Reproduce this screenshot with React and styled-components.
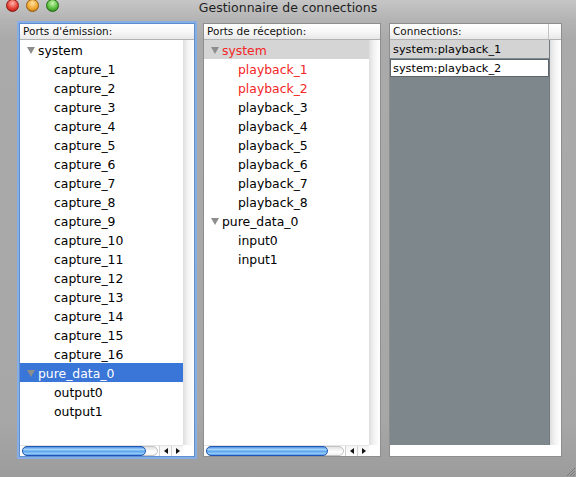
import React from "react";
import styled, { createGlobalStyle } from "styled-components";

const GlobalStyle = createGlobalStyle`
  html, body {
    margin: 0;
    padding: 0;
  }
  body {
    font-family: "DejaVu Sans", "Liberation Sans", sans-serif;
    background: #a5a5a5;
  }
`;

const captures = Array.from({ length: 16 }, (_, i) => `capture_${i + 1}`);
const playbacks = Array.from({ length: 8 }, (_, i) => `playback_${i + 1}`);

const sources = [
  { name: "system", children: captures.map((c) => ({ name: c })) },
  {
    name: "pure_data_0",
    selected: true,
    children: [{ name: "output0" }, { name: "output1" }],
  },
];

const targets = [
  {
    name: "system",
    active: true,
    red: true,
    children: playbacks.map((p, i) => ({ name: p, red: i < 2 })),
  },
  { name: "pure_data_0", children: [{ name: "input0" }, { name: "input1" }] },
];

const lightColors = {
  red: ["#ffb3ab", "#e2392f", "#8e1610"],
  orange: ["#ffe0a0", "#eea52c", "#9a5a08"],
  green: ["#c8f5b0", "#52b936", "#1f6b12"],
};

//tree triangle
const Disclosure = () => (
  <TriangleIcon width="8" height="7" viewBox="0 0 8 7">
    <polygon points="0,0 8,0 4,7" fill="#8d8d8d" />
  </TriangleIcon>
);

const Arrow = ({ dir }) => (
  <svg width="4" height="6" viewBox="0 0 4 6">
    {dir === "left" ? (
      <polygon points="4,0 4,6 0,3" fill="#111" />
    ) : (
      <polygon points="0,0 0,6 4,3" fill="#111" />
    )}
  </svg>
);

const HScroll = ({ thumb }) => (
  <ScrollRow>
    <ScrollBar>
      <Track>
        <Thumb style={{ width: thumb }} />
      </Track>
      <Arrows>
        <ArrowButton>
          <Arrow dir="left" />
        </ArrowButton>
        <ArrowButton>
          <Arrow dir="right" />
        </ArrowButton>
      </Arrows>
    </ScrollBar>
    <Corner />
  </ScrollRow>
);

const Tree = ({ nodes }) => (
  <List>
    {nodes.map((node) => (
      <React.Fragment key={node.name}>
        <Row $selected={node.selected} $active={node.active} $red={node.red}>
          <Disclosure />
          {node.name}
        </Row>
        {node.children.map((child) => (
          <Row key={child.name} $child $red={child.red}>
            {child.name}
          </Row>
        ))}
      </React.Fragment>
    ))}
  </List>
);

const App = () => {
  return (
    <>
      <GlobalStyle />
      <Window>
        <TitleBar>
          <Lights>
            <Light $c="red" />
            <Light $c="orange" />
            <Light $c="green" />
          </Lights>
          <Title>Gestionnaire de connections</Title>
          <span />
        </TitleBar>
        <Panes>
          <Panel $width={176} $focused>
            <Header>Ports d'émission:</Header>
            <Body>
              <Tree nodes={sources} />
              <Strip />
            </Body>
            <HScroll thumb={124} />
          </Panel>
          <Panel $width={178}>
            <Header>Ports de réception:</Header>
            <Body>
              <Tree nodes={targets} />
              <Strip />
            </Body>
            <HScroll thumb={122} />
          </Panel>
          <Panel $width={173}>
            <Header>
              <HeaderCell>Connections:</HeaderCell>
              <HeaderEnd />
            </Header>
            <Body>
              <ConnList>
                <ConnRow>system:playback_1</ConnRow>
                <ConnRow $editing>system:playback_2</ConnRow>
              </ConnList>
              <Strip />
            </Body>
            <BlankRow />
          </Panel>
        </Panes>
        <Grip width="9" height="9" viewBox="0 0 9 9">
          <line x1="9" y1="1" x2="1" y2="9" stroke="#7a7a7a" />
          <line x1="9" y1="4" x2="4" y2="9" stroke="#7a7a7a" />
          <line x1="9" y1="7" x2="7" y2="9" stroke="#7a7a7a" />
        </Grip>
      </Window>
    </>
  );
};

const Window = styled.div`
  position: relative;
  width: 576px;
  height: 477px;
  overflow: hidden;
  display: flex;
  flex-direction: column;
  background: linear-gradient(
    #c6c6c6 0px,
    #b3b3b3 20px,
    #aaaaaa 40px,
    #a7a7a7 420px,
    #9c9c9c 477px
  );
`;

const TitleBar = styled.div`
  height: 23px;
  display: grid;
  grid-template-columns: 1fr auto 1fr;
  align-items: start;
`;

const Lights = styled.div`
  display: flex;
  gap: 7px;
  padding-left: 6px;
  margin-top: -1px;
`;

const Light = styled.span`
  width: 13px;
  height: 13px;
  border-radius: 50%;
  box-sizing: border-box;
  border: 1px solid ${(p) => lightColors[p.$c][2]};
  background: radial-gradient(
    circle at 50% 30%,
    ${(p) => lightColors[p.$c][0]} 0%,
    ${(p) => lightColors[p.$c][1]} 60%,
    ${(p) => lightColors[p.$c][2]} 100%
  );
`;

const Title = styled.div`
  font-size: 12.5px;
  line-height: 15px;
  color: #1e1e1e;
  white-space: nowrap;
`;

const Panes = styled.div`
  display: flex;
  gap: 8px;
  padding-left: 19px;
`;

const Panel = styled.div`
  box-sizing: border-box;
  width: ${(p) => p.$width}px;
  height: 434px;
  display: flex;
  flex-direction: column;
  background: #fff;
  border: 1px solid ${(p) => (p.$focused ? "#5f8fd0" : "#8e8e8e")};
  box-shadow: ${(p) => (p.$focused ? "0 0 0 2px #86aee4" : "none")};
`;

const Header = styled.div`
  box-sizing: border-box;
  height: 16px;
  display: flex;
  padding-left: 3px;
  font-size: 10.5px;
  line-height: 15px;
  color: #111;
  white-space: nowrap;
  border-bottom: 1px solid #b2b2b2;
  background: linear-gradient(#ffffff, #f6f6f6 55%, #e8e8e8);
`;

const HeaderCell = styled.div`
  flex: 1;
`;

const HeaderEnd = styled.div`
  width: 12px;
  border-left: 1px solid #c2c2c2;
`;

const Body = styled.div`
  flex: 1;
  min-height: 0;
  display: flex;
`;

const List = styled.div`
  flex: 1;
  overflow: hidden;
`;

const Row = styled.div`
  box-sizing: border-box;
  height: 19px;
  padding-top: 2px;
  display: flex;
  align-items: center;
  padding-left: ${(p) => (p.$child ? 34 : 7)}px;
  font-size: 12.4px;
  white-space: nowrap;
  color: ${(p) => (p.$selected ? "#fff" : p.$red ? "#f42525" : "#000")};
  background: ${(p) =>
    p.$selected ? "#3a75d8" : p.$active ? "#d5d5d5" : "transparent"};
`;

const TriangleIcon = styled.svg`
  margin-right: 3px;
  margin-top: -1px;
  flex-shrink: 0;
`;

const Strip = styled.div`
  width: 11px;
  background: linear-gradient(to right, #dedede, #f3f3f3 45%, #ffffff);
`;

const ConnList = styled.div`
  flex: 1;
  background: #7e878c;
  border-right: 1px solid #737b80;
`;

const ConnRow = styled.div`
  box-sizing: border-box;
  height: 18px;
  margin-top: ${(p) => (p.$editing ? 1 : 0)}px;
  padding-left: ${(p) => (p.$editing ? 2 : 3)}px;
  padding-top: 1px;
  font-size: 11.3px;
  line-height: ${(p) => (p.$editing ? 15 : 17)}px;
  color: #000;
  white-space: nowrap;
  background: ${(p) => (p.$editing ? "#fff" : "#d3d3d3")};
  border: ${(p) => (p.$editing ? "1px solid #5e666b" : "none")};
`;

const ScrollRow = styled.div`
  height: 11px;
  display: flex;
`;

const BlankRow = styled.div`
  height: 11px;
  background: #fff;
`;

const ScrollBar = styled.div`
  flex: 1;
  display: flex;
  align-items: center;
  border-top: 1px solid #e4e4e4;
`;

const Track = styled.div`
  flex: 1;
  height: 10px;
  margin-left: 2px;
  margin-right: 1px;
  display: flex;
  border-radius: 5px;
  box-sizing: border-box;
  border: 1px solid #c4c4c4;
  background: linear-gradient(#e2e2e2, #ffffff 60%, #f2f2f2);
`;

const Thumb = styled.div`
  height: 10px;
  margin: -1px 0 0 -1px;
  box-sizing: border-box;
  border-radius: 5px;
  border: 1px solid #1f58b4;
  background: linear-gradient(
    #4d8fe2 0%,
    #a6d4fb 30%,
    #5ea7ee 55%,
    #98cdfa 85%,
    #4a8ce0 100%
  );
`;

const Arrows = styled.div`
  width: 24px;
  height: 100%;
  display: flex;
`;

const ArrowButton = styled.div`
  flex: 1;
  display: flex;
  align-items: center;
  justify-content: center;
  border-left: 1px solid #d2d2d2;
  background: linear-gradient(#f4f4f4, #ffffff);
`;

const Corner = styled.div`
  width: 11px;
  background: #fff;
`;

const Grip = styled.svg`
  position: absolute;
  right: 1px;
  bottom: 1px;
`;

export default App;
